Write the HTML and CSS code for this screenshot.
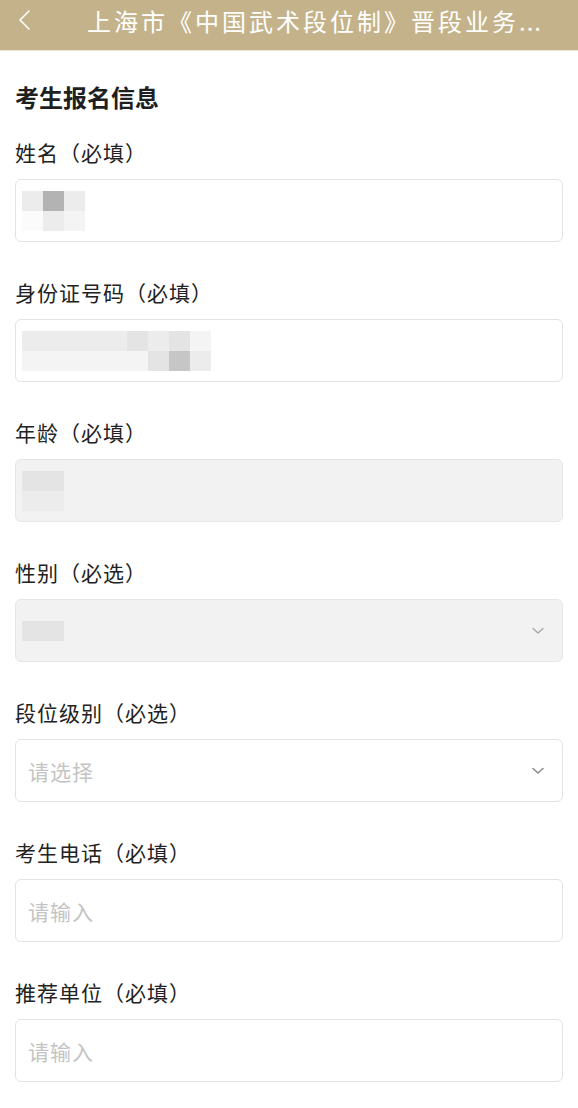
FILE: index.html
```html
<!DOCTYPE html>
<html lang="zh-CN">
<head>
<meta charset="utf-8">
<title>考生报名信息</title>
<link rel="stylesheet" href="styles.css">
</head>
<body>
<header class="topbar">
  <span class="back">
    <svg width="14" height="24" viewBox="0 0 14 24"><polyline points="11,2 2,11 11,20" fill="none" stroke="#fff" stroke-width="1.6" stroke-linecap="round" stroke-linejoin="round"/></svg>
  </span>
  <h1 class="topbar-title">上海市《中国武术段位制》晋段业务<span class="dots">...</span></h1>
</header>
<main class="page">
  <h2 class="section-title">考生报名信息</h2>

  <div class="field">
    <div class="label">姓名（必填）</div>
    <div class="box">
      <div class="mosaic mosaic-3">
        <i class="c2"></i><i class="c5"></i><i class="c2"></i>
        <i class="c0"></i><i class="c2"></i><i class="c1"></i>
      </div>
    </div>
  </div>

  <div class="field">
    <div class="label">身份证号码（必填）</div>
    <div class="box">
      <div class="mosaic mosaic-9">
        <i class="c2"></i><i class="c2"></i><i class="c2"></i><i class="c2"></i><i class="c2"></i><i class="c3"></i><i class="c2"></i><i class="c3"></i><i class="c1"></i>
        <i class="c1"></i><i class="c1"></i><i class="c1"></i><i class="c1"></i><i class="c1"></i><i class="c1"></i><i class="c3"></i><i class="c4"></i><i class="c2"></i>
      </div>
    </div>
  </div>

  <div class="field">
    <div class="label">年龄（必填）</div>
    <div class="box disabled">
      <div class="mosaic mosaic-2">
        <i class="c3"></i><i class="c3"></i>
        <i class="c2"></i><i class="c2"></i>
      </div>
    </div>
  </div>

  <div class="field">
    <div class="label">性别（必选）</div>
    <div class="box disabled select">
      <div class="mosaic mosaic-2 single">
        <i class="c3"></i><i class="c3"></i>
      </div>
      <svg class="chev" width="12" height="8" viewBox="0 0 12 8"><polyline points="1,1.5 6,6 11,1.5" fill="none" stroke="#a8a8a8" stroke-width="1.4" stroke-linecap="round" stroke-linejoin="round"/></svg>
    </div>
  </div>

  <div class="field">
    <div class="label">段位级别（必选）</div>
    <div class="box select">
      <span class="placeholder">请选择</span>
      <svg class="chev" width="12" height="8" viewBox="0 0 12 8"><polyline points="1,1.5 6,6 11,1.5" fill="none" stroke="#8a8a8a" stroke-width="1.5" stroke-linecap="round" stroke-linejoin="round"/></svg>
    </div>
  </div>

  <div class="field">
    <div class="label">考生电话（必填）</div>
    <div class="box">
      <span class="placeholder">请输入</span>
    </div>
  </div>

  <div class="field">
    <div class="label">推荐单位（必填）</div>
    <div class="box">
      <span class="placeholder">请输入</span>
    </div>
  </div>
</main>
</body>
</html>
```

FILE: styles.css
```css
* { box-sizing: border-box; }
html, body { margin: 0; padding: 0; }
body {
  background: #ffffff;
  font-family: "Noto Sans CJK SC", "Noto Sans", sans-serif;
  color: #222222;
  width: 578px;
  overflow: hidden;
}
.topbar {
  height: 51px;
  background: #c4b38a;
  border-bottom: 1px solid #ece6d8;
  display: flex;
  align-items: center;
  padding: 0 18px 8px 18px;
}
.back {
  width: 69px;
  flex: none;
  display: flex;
  align-items: center;
}
.back svg { display: block; }
.topbar-title {
  margin: 0;
  font-size: 24px;
  font-weight: 400;
  letter-spacing: 3px;
  line-height: 30px;
  color: #ffffff;
  white-space: nowrap;
  flex: 1;
  min-width: 0;
}
.dots {
  letter-spacing: 1px;
}
.page {
  padding: 31px 15px 0 15px;
}
.section-title {
  margin: 0 0 25px 0;
  font-size: 24px;
  line-height: 30px;
  font-weight: 700;
  color: #1f1f1f;
}
.field { margin-bottom: 35px; }
.label {
  font-size: 21px;
  line-height: 30px;
  color: #222222;
  margin-bottom: 12px;
  letter-spacing: 1px;
}
.box {
  height: 63px;
  width: 548px;
  border: 1px solid #e3e3e3;
  border-radius: 6px;
  background: #ffffff;
  display: flex;
  align-items: center;
  padding: 0 18px 0 6px;
}
.box.disabled {
  background: #f2f2f2;
  border-color: #e6e6e6;
}
.select { justify-content: space-between; }
.placeholder {
  font-size: 21px;
  line-height: 30px;
  color: #c4c4c4;
  padding-left: 6px;
  letter-spacing: 1px;
}
.chev { display: block; flex: none; }
.mosaic {
  display: grid;
  grid-auto-rows: 20px;
}
.mosaic-3 { grid-template-columns: repeat(3, 21px); }
.mosaic-9 { grid-template-columns: repeat(9, 21px); }
.mosaic-2 { grid-template-columns: repeat(2, 21px); }
.mosaic i { display: block; }
.mosaic .c0 { background: #fbfbfb; }
.mosaic .c1 { background: #f4f4f4; }
.mosaic .c2 { background: #ececec; }
.mosaic .c3 { background: #e4e4e4; }
.mosaic .c4 { background: #c6c6c6; }
.mosaic .c5 { background: #b3b3b3; }
```
